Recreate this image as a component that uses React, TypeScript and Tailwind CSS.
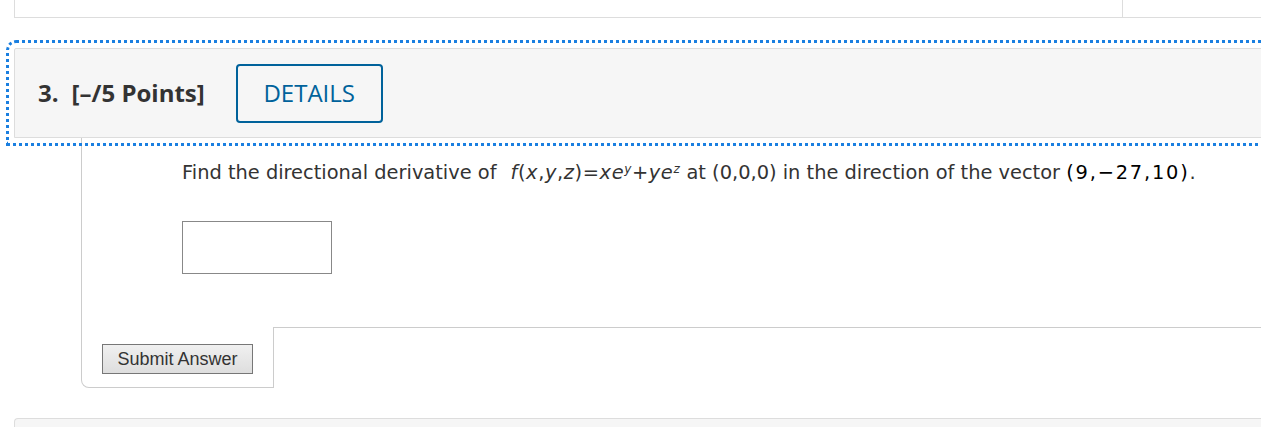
import React from 'react'

export default function App() {
  return (
    <div className="w-[1261px] h-[427px] overflow-hidden bg-white text-[#333]">
      <div className="w-[1300px]">
        {/* previous question box */}
        <div className="ml-[14px] h-[18px] border-l border-b border-[#ddd] flex">
          <div className="w-[1108px] border-r border-[#ddd]" />
        </div>

        {/* header */}
        <div className="ml-[14px] mt-[30px] h-[90px] border border-[#ddd] bg-[#f6f6f6] rounded-tl-[2px] outline-3 outline-dotted outline-offset-[5px] outline-[#1a7fe0] flex items-center pl-[23px] font-['Open_Sans',sans-serif]">
          <span className="text-[24px] font-bold text-[#333]">3.</span>
          <span className="ml-[13px] text-[24px] font-bold text-[#333]">[–/5 Points]</span>
          <button className="ml-[31px] w-[147px] h-[59px] border-2 border-[#00629b] rounded-[4px] text-[24px] text-[#00629b]">
            DETAILS
          </button>
        </div>

        {/* question body */}
        <div className="ml-[81px]">
          <div className="border-l border-[#ccc] pl-[100px] pt-[23px] pb-[53px]">
            <p className="font-['DejaVu_Sans',sans-serif] text-[19.4px] leading-[24px] text-[#333] whitespace-nowrap">
              Find the directional derivative of
              <span className="ml-[14px] tracking-[0.6px]">
                <span className="italic">f</span>(<span className="italic">x</span>,<span className="italic">y</span>,<span className="italic">z</span>)=<span className="italic">xe</span>
                <sup className="italic text-[12px]">y</sup>+<span className="italic">ye</span>
                <sup className="italic text-[12px]">z</sup>
              </span>{' '}
              at (0,0,0) in the direction of the vector{' '}
              <span className="text-black tracking-[1.8px]">(9,−27,10)</span>.
            </p>
            <input className="mt-[36px] block w-[150px] h-[53px] border border-[#888] bg-white" />
          </div>
          <div className="flex">
            <div className="w-[193px] h-[61px] border-l border-r border-b border-[#ccc] rounded-bl-[8px] pl-[20px] pt-[17px]">
              <button className="w-[151px] h-[30px] border border-[#777] bg-gradient-to-b from-[#f0f0f0] to-[#dedede] text-[18px] text-[#333] font-['Liberation_Sans',Arial,sans-serif] leading-none">
                Submit Answer
              </button>
            </div>
            <div className="flex-1 border-t border-[#ccc]" />
          </div>
        </div>

        {/* next question box */}
        <div className="ml-[14px] mt-[30px] h-[20px] border-t border-l border-[#ddd] rounded-tl-[4px] bg-[#f6f6f6]" />
      </div>
    </div>
  )
}
